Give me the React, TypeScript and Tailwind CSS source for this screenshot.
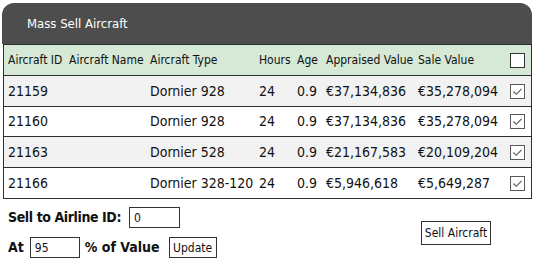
import React from "react";

const font = { fontFamily: '"DejaVu Sans Condensed", "DejaVu Sans", sans-serif' };

const rows = [
  { id: "21159", type: "Dornier 928", hours: "24", age: "0.9", appr: "€37,134,836", sale: "€35,278,094", bg: "bg-[#f2f2f2]", h: "h-[31px]" },
  { id: "21160", type: "Dornier 928", hours: "24", age: "0.9", appr: "€37,134,836", sale: "€35,278,094", bg: "bg-white", h: "h-[30px]" },
  { id: "21163", type: "Dornier 528", hours: "24", age: "0.9", appr: "€21,167,583", sale: "€20,109,204", bg: "bg-[#f2f2f2]", h: "h-[31px]" },
  { id: "21166", type: "Dornier 328-120", hours: "24", age: "0.9", appr: "€5,946,618", sale: "€5,649,287", bg: "bg-white", h: "h-[30px]" },
];

const grid = "grid grid-cols-[61px_81px_109px_38px_29px_92px_92px_1fr] items-center pl-[4px]";

function CheckBox({ checked }: { checked?: boolean }) {
  return (
    <div
      className={
        "w-[15px] h-[15px] bg-white flex items-center justify-center border " +
        (checked ? "border-[#5a5a5a]" : "border-[#333333]")
      }
    >
      {checked && (
        <svg width="11" height="11" viewBox="0 0 11 11">
          <path d="M1.5 5.5 L4.3 8.3 L9.5 2.8" fill="none" stroke="#555" strokeWidth="1.1" />
        </svg>
      )}
    </div>
  );
}

export default function App() {
  return (
    <div className="w-[542px] h-[276px] bg-white text-[#111]" style={font}>
      <div className="pt-[3px] pl-[2px] w-[532px]">
        <div className="h-[41px] bg-[#4d4d4d] rounded-t-[12px] flex items-center pl-[25px] text-white text-[13px]">
          Mass Sell Aircraft
        </div>
        <div className="ml-[1px] border-x border-b border-[#2f2f2f]">
          <div className={grid + " h-[32px] bg-[#d6e8d6] border-y border-[#2f2f2f] text-[12px]"}>
            <div>Aircraft ID</div>
            <div>Aircraft Name</div>
            <div>Aircraft Type</div>
            <div>Hours</div>
            <div>Age</div>
            <div>Appraised Value</div>
            <div>Sale Value</div>
            <div className="flex justify-start">
              <CheckBox />
            </div>
          </div>
          {rows.map((r, i) => (
            <div
              key={r.id}
              className={
                grid + " text-[14px] " + r.bg + " " + r.h + (i < rows.length - 1 ? " border-b border-[#2f2f2f]" : "")
              }
            >
              <div>{r.id}</div>
              <div></div>
              <div className="whitespace-nowrap">{r.type}</div>
              <div>{r.hours}</div>
              <div>{r.age}</div>
              <div>{r.appr}</div>
              <div>{r.sale}</div>
              <div className="flex justify-start">
                <CheckBox checked />
              </div>
            </div>
          ))}
        </div>
      </div>
      <div className="flex items-center mt-[8px]">
        <div className="w-[421px] pl-[8px] flex flex-col gap-[9px]">
          <div className="flex items-center font-bold text-[14px]">
            <span className="tracking-[-0.4px]">Sell to Airline ID:</span>
            <div className="ml-[8px] w-[51px] h-[21px] border border-[#333] bg-white text-[12px] font-normal flex items-center pl-[4px]">
              0
            </div>
          </div>
          <div className="flex items-center font-bold text-[14px]">
            <span>At</span>
            <div className="ml-[6px] w-[50px] h-[21px] border border-[#333] bg-white text-[12px] font-normal flex items-center pl-[4px]">
              95
            </div>
            <span className="ml-[5px]">% of Value</span>
            <div className="ml-[9px] w-[48px] h-[21px] border border-[#333] bg-white text-[12px] font-normal flex items-center justify-center">
              Update
            </div>
          </div>
        </div>
        <div className="w-[70px] h-[24px] border border-[#333] bg-white text-[12px] flex items-center justify-center mt-[1px]">
          Sell Aircraft
        </div>
      </div>
    </div>
  );
}
